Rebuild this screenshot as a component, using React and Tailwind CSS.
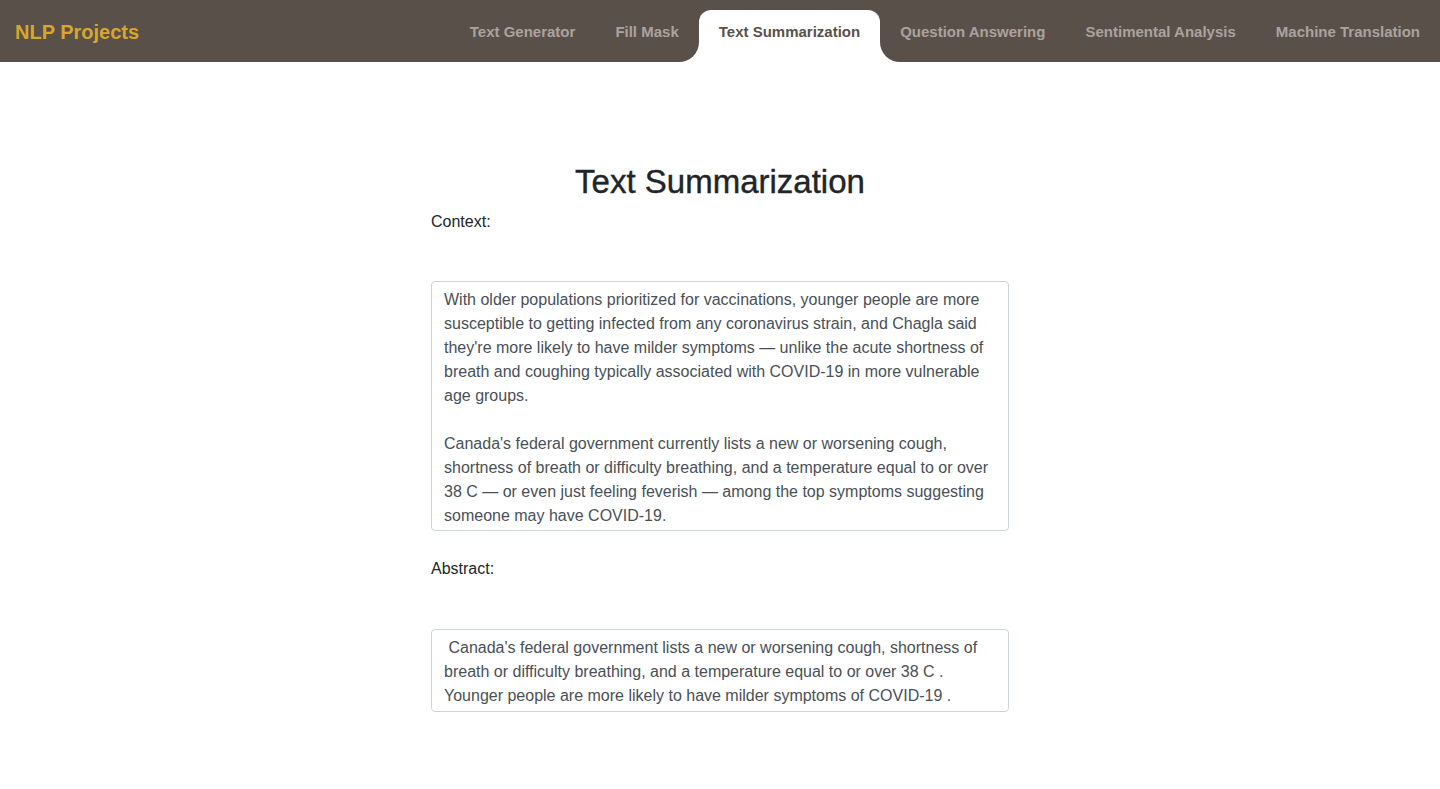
import { useState } from "react";

const tabs = [
  "Text Generator",
  "Fill Mask",
  "Text Summarization",
  "Question Answering",
  "Sentimental Analysis",
  "Machine Translation",
];

const contextLines = [
  "With older populations prioritized for vaccinations, younger people are more",
  "susceptible to getting infected from any coronavirus strain, and Chagla said",
  "they're more likely to have milder symptoms — unlike the acute shortness of",
  "breath and coughing typically associated with COVID-19 in more vulnerable",
  "age groups.",
  "",
  "Canada's federal government currently lists a new or worsening cough,",
  "shortness of breath or difficulty breathing, and a temperature equal to or over",
  "38 C — or even just feeling feverish — among the top symptoms suggesting",
  "someone may have COVID-19.",
];

const abstractLines = [
  "\u00a0Canada's federal government lists a new or worsening cough, shortness of",
  "breath or difficulty breathing, and a temperature equal to or over 38 C .",
  "Younger people are more likely to have milder symptoms of COVID-19 .",
];

function Box({ lines, height }) {
  return (
    <div
      className={`rounded-[4px] border border-[#ced4da] px-3 pt-[6px] text-[16px] leading-6 text-[#495057] overflow-hidden ${height}`}
    >
      {lines.map((l, i) => (
        <div key={i} className="whitespace-nowrap h-6">
          {l}
        </div>
      ))}
    </div>
  );
}

export default function App() {
  const [active, setActive] = useState("Text Summarization");

  return (
    <div
      className="min-h-screen bg-white"
      style={{ fontFamily: '"Liberation Sans", Arial, sans-serif' }}
    >
      {/* top bar */}
      <header className="h-[62px] bg-[#5a504a] flex items-end justify-between">
        <div className="self-center pl-[15px] pt-px text-[20px] font-bold text-[#d6a72b]">
          NLP Projects
        </div>
        <nav className="flex items-end h-full">
          {tabs.map((t) => {
            const on = t === active;
            return (
              <button
                key={t}
                onClick={() => setActive(t)}
                className={
                  on
                    ? "relative h-[52px] px-5 pb-[7px] rounded-t-[12px] bg-white text-[15px] font-bold text-[#5a504a]"
                    : "h-full px-5 pt-[3px] text-[15px] font-bold text-[#aaa39f]"
                }
              >
                {t}
                {on && (
                  <>
                    <span className="absolute bottom-0 -left-5 w-5 h-5 rounded-br-[20px] shadow-[8px_8px_0_8px_#ffffff]" />
                    <span className="absolute bottom-0 -right-5 w-5 h-5 rounded-bl-[20px] shadow-[-8px_8px_0_8px_#ffffff]" />
                  </>
                )}
              </button>
            );
          })}
        </nav>
      </header>

      <main className="w-[578px] mx-auto pt-[101px] text-[#212529]">
        <h1 className="text-center text-[33px] leading-[38px] mb-[9px] [-webkit-text-stroke:0.4px_#212529]">
          Text Summarization
        </h1>
        <div className="text-[16px] leading-6">Context:</div>
        <div className="mt-[47px]">
          <Box lines={contextLines} height="h-[250px]" />
        </div>
        <div className="mt-[26px] text-[16px] leading-6">Abstract:</div>
        <div className="mt-[48px]">
          <Box lines={abstractLines} height="h-[83px]" />
        </div>
      </main>
    </div>
  );
}
